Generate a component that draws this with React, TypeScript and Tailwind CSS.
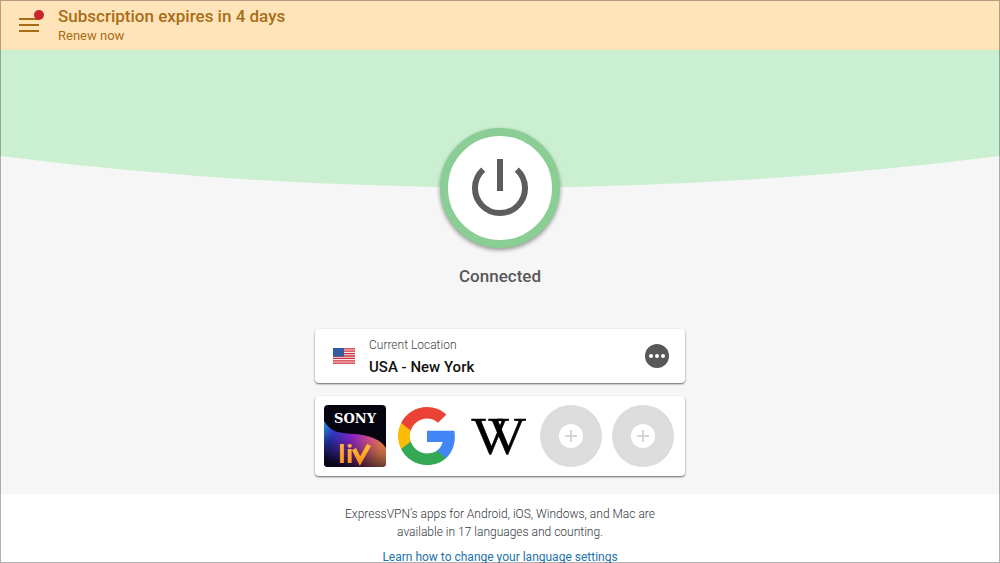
import type { ReactNode } from "react";

const emptySlots = [4, 5];

export default function App() {
  return (
    <div className="flex h-screen flex-col overflow-hidden bg-white font-['Roboto',sans-serif]">
      <ExpiryBanner />

      <main className="flex shrink-0 flex-col items-center bg-[#f6f6f6] pb-[18px]">
        <svg
          viewBox="0 0 1000 138"
          preserveAspectRatio="none"
          className="h-[138px] w-full"
          aria-hidden="true"
        >
          <path d="M0 0H1000V106Q500 169 0 106Z" fill="#cbf0d1" />
        </svg>

        <button
          type="button"
          aria-label="Disconnect"
          className="relative -mt-[60px] flex size-[120px] items-center justify-center rounded-full border-8 border-[#8bce95] bg-white shadow-[0_2px_4px_rgba(0,0,0,0.4)]"
        >
          <svg viewBox="0 0 60 60" className="size-[60px]" fill="none" stroke="#5c5c5c" strokeWidth="6">
            <path d="M13.2 11.6A25 25 0 1 0 46.8 11.6" />
            <path d="M30 1V33" />
          </svg>
        </button>
        <p className="mt-4 text-[17px] leading-6 font-medium text-[#585858]">Connected</p>

        <div className="mt-[41px] flex w-full max-w-[370px] flex-col gap-[13px]">
          <LocationCard />
          <Shortcuts />
        </div>
      </main>

      <footer className="shrink-0 pt-[11px] text-center text-[12px] leading-[18px]">
        <p className="mx-auto max-w-[340px] font-light text-[#333740]">
          ExpressVPN’s apps for Android, iOS, Windows, and Mac are available in 17 languages and
          counting.
        </p>
        <a href="#language" className="mt-[7px] inline-block text-[#2272ac]">
          Learn how to change your language settings
        </a>
      </footer>

      <div className="pointer-events-none fixed inset-0 border border-black/30" />
    </div>
  );
}

function ExpiryBanner() {
  return (
    <header className="flex h-[50px] shrink-0 items-center bg-[#ffe4ba] pl-[19px] text-[#a86d16]">
      <button type="button" aria-label="Menu" className="relative flex w-5 flex-col gap-1">
        <span className="h-0.5 bg-[#a86d16]" />
        <span className="h-0.5 bg-[#a86d16]" />
        <span className="h-0.5 bg-[#a86d16]" />
        <span className="absolute -top-2 -right-[5px] size-[10px] rounded-full bg-[#c9252d]" />
      </button>
      <div className="ml-[19px] pt-0.5">
        <h1 className="text-[17px] leading-5 font-medium">Subscription expires in 4 days</h1>
        <a href="#renew" className="block text-[13px] leading-5">
          Renew now
        </a>
      </div>
    </header>
  );
}

function Card({ children }: { children: ReactNode }) {
  return (
    <section className="flex items-center rounded bg-white shadow-[0_1px_2px_rgba(0,0,0,0.6)]">
      {children}
    </section>
  );
}

function LocationCard() {
  return (
    <Card>
      <div className="flex h-[54px] flex-1 items-center pr-4 pl-[18px]">
        <UsFlag />
        <div className="ml-[14px] flex-1">
          <div className="text-[12px] leading-[22px] font-light text-[#444]">Current Location</div>
          <div className="text-[15px] leading-[22px] font-medium text-[#111]">USA - New York</div>
        </div>
        <button
          type="button"
          aria-label="More locations"
          className="flex size-6 items-center justify-center gap-0.5 rounded-full bg-[#585858]"
        >
          <span className="size-1 rounded-full bg-white" />
          <span className="size-1 rounded-full bg-white" />
          <span className="size-1 rounded-full bg-white" />
        </button>
      </div>
    </Card>
  );
}

function Shortcuts() {
  return (
    <Card>
      <div className="flex h-20 items-center gap-[10px] pl-[9px]">
        <button type="button" aria-label="Sony LIV">
          <SonyLiv />
        </button>
        <button type="button" aria-label="Google" className="flex w-[62px] justify-center">
          <GoogleLogo />
        </button>
        <button type="button" aria-label="Wikipedia" className="flex w-[62px] justify-center">
          <WikipediaLogo />
        </button>
        {emptySlots.map((slot) => (
          <button
            key={slot}
            type="button"
            aria-label={`Add shortcut ${slot}`}
            className="flex size-[62px] items-center justify-center rounded-full bg-[#dcdcdc]"
          >
            <svg viewBox="0 0 24 24" className="size-6">
              <circle cx="12" cy="12" r="12" fill="#fff" />
              <path d="M12 6V18M6 12H18" stroke="#d6d6d6" strokeWidth="2" />
            </svg>
          </button>
        ))}
      </div>
    </Card>
  );
}

function UsFlag() {
  return (
    <svg viewBox="0 0 22 16" className="h-4 w-[22px]" aria-label="United States">
      <rect width="22" height="16" fill="#f4e6ea" />
      <path
        d="M0 .8H22M0 3.2H22M0 5.6H22M0 8H22M0 10.4H22M0 12.8H22M0 15.2H22"
        stroke="#d2333f"
        strokeWidth="1.3"
      />
      <rect width="11" height="8.6" fill="#2f559e" />
      <path
        d="M1.5 1.8H10M1.5 4.2H10M1.5 6.6H10"
        stroke="#7f98c8"
        strokeWidth=".6"
        strokeDasharray=".8 1.2"
      />
    </svg>
  );
}

function SonyLiv() {
  return (
    <svg viewBox="0 0 62 62" className="size-[62px] overflow-visible">
      <defs>
        <clipPath id="tile">
          <rect width="62" height="62" rx="4" />
        </clipPath>
        <linearGradient id="wave" x1="0" y1="0" x2="1" y2="0.3">
          <stop offset="0" stopColor="#2bb4ff" />
          <stop offset="0.2" stopColor="#3548f0" />
          <stop offset="0.5" stopColor="#9a2ae6" />
          <stop offset="0.75" stopColor="#e2509c" />
          <stop offset="1" stopColor="#ff8a4a" />
        </linearGradient>
        <linearGradient id="fade" x1="0.7" y1="0.2" x2="0.3" y2="1">
          <stop offset="0" stopColor="#0a0628" stopOpacity="0" />
          <stop offset="0.4" stopColor="#0a0628" stopOpacity="0.3" />
          <stop offset="1" stopColor="#04030f" stopOpacity="0.95" />
        </linearGradient>
        <linearGradient id="gold" x1="0" y1="0" x2="0" y2="1">
          <stop offset="0" stopColor="#ffc233" />
          <stop offset="1" stopColor="#f7941d" />
        </linearGradient>
      </defs>
      <g clipPath="url(#tile)">
        <rect width="62" height="62" fill="#05040f" />
        <path d="M0 16C7 28 17 28 30 29C46 30 57 35 62 43V62H0Z" fill="url(#wave)" />
        <path d="M0 16C7 28 17 28 30 29C46 30 57 35 62 43V62H0Z" fill="url(#fade)" />
      </g>
      <text
        x="31"
        y="18"
        textAnchor="middle"
        fontSize="13"
        fontWeight="700"
        fill="#fff"
        className="font-['DejaVu_Serif',serif]"
      >
        SONY
      </text>
      <text
        x="14"
        y="58"
        fontSize="25"
        fontWeight="700"
        fill="url(#gold)"
        className="font-['Open_Sans',sans-serif]"
      >
        li
      </text>
      <path d="M30 44L36 56L45 40" fill="none" stroke="url(#gold)" strokeWidth="4.5" />
    </svg>
  );
}

function GoogleLogo() {
  return (
    <svg viewBox="1 1 22 22" className="size-[58px]">
      <path
        fill="#4285f4"
        d="M22.56 12.25c0-.78-.07-1.53-.2-2.25H12v4.26h5.92c-.26 1.37-1.04 2.53-2.21 3.31v2.77h3.57c2.08-1.92 3.28-4.74 3.28-8.09z"
      />
      <path
        fill="#34a853"
        d="M12 23c2.97 0 5.46-.98 7.28-2.66l-3.57-2.77c-.98.66-2.23 1.06-3.71 1.06-2.86 0-5.29-1.93-6.16-4.53H2.18v2.84C3.99 20.53 7.7 23 12 23z"
      />
      <path
        fill="#fbbc05"
        d="M5.84 14.09c-.22-.69-.35-1.36-.35-2.09s.13-1.43.35-2.09V7.07H2.18C1.43 8.55 1 10.22 1 12s.43 3.45 1.18 4.93l2.85-2.22.81-.62z"
      />
      <path
        fill="#ea4335"
        d="M12 5.38c1.62 0 3.06.56 4.21 1.64l3.15-3.15C17.45 2.09 14.97 1 12 1 7.7 1 3.99 3.47 2.18 7.07l3.66 2.84c.87-2.6 3.3-4.53 6.16-4.53z"
      />
    </svg>
  );
}

// The mark is two overlapping serif Vs.
function WikipediaLogo() {
  return (
    <svg
      viewBox="0 0 62 62"
      stroke="#000"
      strokeWidth="0.6"
      className="size-[62px] font-['Liberation_Serif',serif] text-[53px]"
    >
      <text x="3" y="49">
        V
      </text>
      <text x="20" y="49">
        V
      </text>
    </svg>
  );
}
